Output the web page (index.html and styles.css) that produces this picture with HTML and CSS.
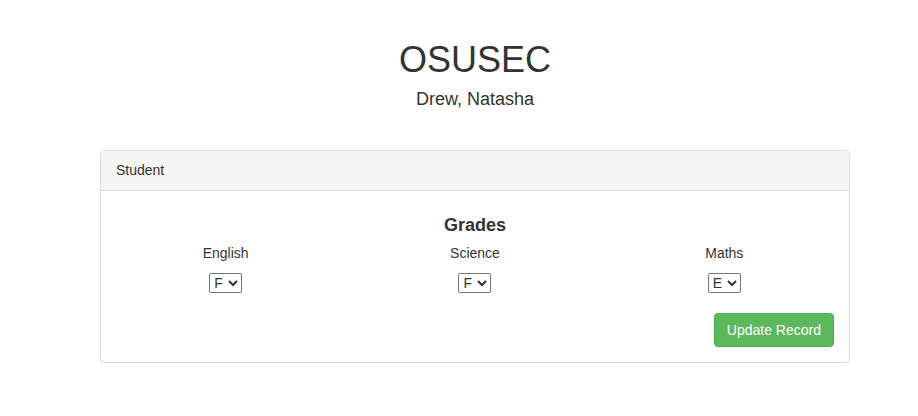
FILE: index.html
```html
<!DOCTYPE html>
<html>
<head>
<meta charset="utf-8">
<link rel="stylesheet" href="styles.css">
</head>
<body>
<div class="container">
  <header class="page-head">
    <h1 class="title">OSUSEC</h1>
    <h4 class="subtitle">Drew, Natasha</h4>
  </header>
  <div class="panel">
    <div class="panel-heading">Student</div>
    <div class="panel-body">
      <h4 class="grades">Grades</h4>
      <div class="row">
        <div class="col">
          <label class="lbl">English</label>
          <select class="sel"><option>A</option><option>B</option><option>C</option><option>D</option><option>E</option><option selected>F</option></select>
        </div>
        <div class="col">
          <label class="lbl">Science</label>
          <select class="sel"><option>A</option><option>B</option><option>C</option><option>D</option><option>E</option><option selected>F</option></select>
        </div>
        <div class="col">
          <label class="lbl">Maths</label>
          <select class="sel"><option>A</option><option>B</option><option>C</option><option>D</option><option selected>E</option><option>F</option></select>
        </div>
      </div>
      <div class="actions">
        <button class="btn">Update Record</button>
      </div>
    </div>
  </div>
</div>
</body>
</html>
```
FILE: styles.css
```css
* { box-sizing: border-box; }
html, body { margin: 0; padding: 0; background: #fff; }
body {
  font-family: "Liberation Sans", Arial, sans-serif;
  font-size: 14px;
  line-height: 20px;
  color: #333;
}
.container {
  width: 750px;
  margin-left: 100px;
}
.page-head {
  text-align: center;
  padding-top: 40px;
  margin-bottom: 41px;
}
.title {
  margin: 0;
  font-size: 36px;
  line-height: 39.6px;
  font-weight: 500;
}
.subtitle {
  margin: 10px 0 0;
  font-size: 18px;
  line-height: 19.8px;
  font-weight: 500;
}
.panel {
  border: 1px solid #ddd;
  border-radius: 4px;
  background: #fff;
  box-shadow: 0 1px 1px rgba(0,0,0,.05);
}
.panel-heading {
  background: #f5f5f5;
  border-bottom: 1px solid #ddd;
  border-radius: 3px 3px 0 0;
  padding: 10px 15px;
  line-height: 19px;
}
.panel-body {
  padding: 15px;
}
.grades {
  margin: 10px 0 7px;
  text-align: center;
  font-size: 18px;
  line-height: 19.8px;
  font-weight: 700;
}
.row {
  display: grid;
  grid-template-columns: 1fr 1fr 1fr;
  margin: 0 -15px;
}
.col {
  display: flex;
  flex-direction: column;
  align-items: center;
  padding: 0 15px;
}
.lbl {
  display: block;
  margin-bottom: 10px;
  line-height: 20px;
}
.sel {
  font-family: "Liberation Sans", Arial, sans-serif;
  font-size: 14px;
  height: 20px;
  padding: 0;
  border: 1px solid #767676;
  border-radius: 2px;
  background: #fff;
  color: #333;
}
.actions {
  display: flex;
  justify-content: flex-end;
  margin-top: 20px;
}
.btn {
  font-family: "Liberation Sans", Arial, sans-serif;
  font-size: 14px;
  line-height: 20px;
  padding: 6px 12px;
  color: #fff;
  background: #5cb85c;
  border: 1px solid #4cae4c;
  border-radius: 4px;
  white-space: nowrap;
}
```
